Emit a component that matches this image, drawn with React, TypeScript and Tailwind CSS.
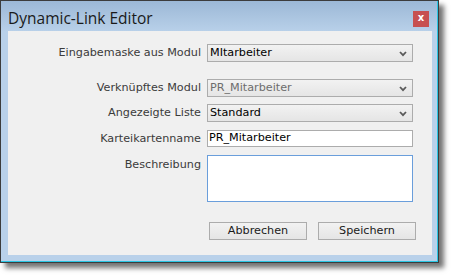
import React from "react";

const label = "text-right text-[11.2px] leading-none text-[#3b3b3b] pr-[6px] w-[199px] shrink-0";
const font = { fontFamily: '"DejaVu Sans", Verdana, sans-serif' };

function Chevron() {
  return (
    <svg width="8" height="6" viewBox="0 0 8 6" className="absolute right-[5px] top-[6px]">
      <path d="M1 1 L4 4.2 L7 1" stroke="#5a5a5a" strokeWidth="1.8" fill="none" />
    </svg>
  );
}

function Select({ value, disabled }: { value: string; disabled?: boolean }) {
  return (
    <div
      className={`relative w-[206px] h-[18px] border border-[#acacac] bg-gradient-to-b from-[#f2f2f2] to-[#e5e5e5] flex items-center pl-[2px] text-[11.2px] ${disabled ? "text-[#6d6d6d]" : "text-black"}`}
    >
      {value}
      <Chevron />
    </div>
  );
}

export default function App() {
  return (
    <div className="w-[455px] h-[279px] bg-white" style={font}>
      <div className="w-[439px] h-[263px] border border-[#3c3c3c] bg-[#b9d1ea] shadow-[5px_5px_5px_rgba(0,0,0,0.55)] flex flex-col">
        <div className="h-[30px] shrink-0 bg-gradient-to-b from-[#9cb8d6] to-[#b8d0e9] flex items-start justify-between pl-[7px] pr-[8px] border-r border-b-0 border-[#2ac6e4]">
          <span
            className="text-[15.5px] leading-none text-[#1a1a1a] mt-[10px]"
            style={{ fontFamily: '"Open Sans", "Noto Sans", sans-serif' }}
          >
            Dynamic-Link Editor
          </span>
          <div className="w-[16px] h-[16px] mt-[10px] bg-[#c75050] flex items-center justify-center">
            <span className="text-white text-[10px] font-bold leading-none mb-[2px]">x</span>
          </div>
        </div>
        <div className="flex-1 flex border-r border-b border-[#2ac6e4]">
          <div className="ml-[7px] mr-[5px] mb-[6px] flex-1 bg-[#f0f0f0] flex flex-col pt-[13px]">
            <div className="flex items-center h-[18px]">
              <div className={label}>Eingabemaske aus Modul</div>
              <Select value="MItarbeiter" />
            </div>
            <div className="flex items-center h-[18px] mt-[17px]">
              <div className={label}>Verknüpftes Modul</div>
              <Select value="PR_Mitarbeiter" disabled />
            </div>
            <div className="flex items-center h-[18px] mt-[7px]">
              <div className={label}>Angezeigte Liste</div>
              <Select value="Standard" />
            </div>
            <div className="flex items-center h-[17px] mt-[8px]">
              <div className={label}>Karteikartenname</div>
              <div className="w-[206px] h-[17px] border border-[#acacac] bg-white flex items-center pl-[1px] text-[11.2px] text-black">
                PR_Mitarbeiter
              </div>
            </div>
            <div className="flex items-start mt-[8px]">
              <div className={`${label} pt-[4px]`}>Beschreibung</div>
              <div className="w-[206px] h-[47px] border border-[#6a9edb] bg-white" />
            </div>
            <div className="flex mt-[20px] pl-[201px] gap-[11px]">
              <div className="w-[98px] h-[18px] border border-[#acacac] bg-gradient-to-b from-[#f2f2f2] to-[#e5e5e5] flex items-center justify-center text-[11.2px] text-[#1a1a1a]">
                Abbrechen
              </div>
              <div className="w-[98px] h-[18px] border border-[#acacac] bg-gradient-to-b from-[#f2f2f2] to-[#e5e5e5] flex items-center justify-center text-[11.2px] text-[#1a1a1a]">
                Speichern
              </div>
            </div>
          </div>
        </div>
      </div>
    </div>
  );
}
